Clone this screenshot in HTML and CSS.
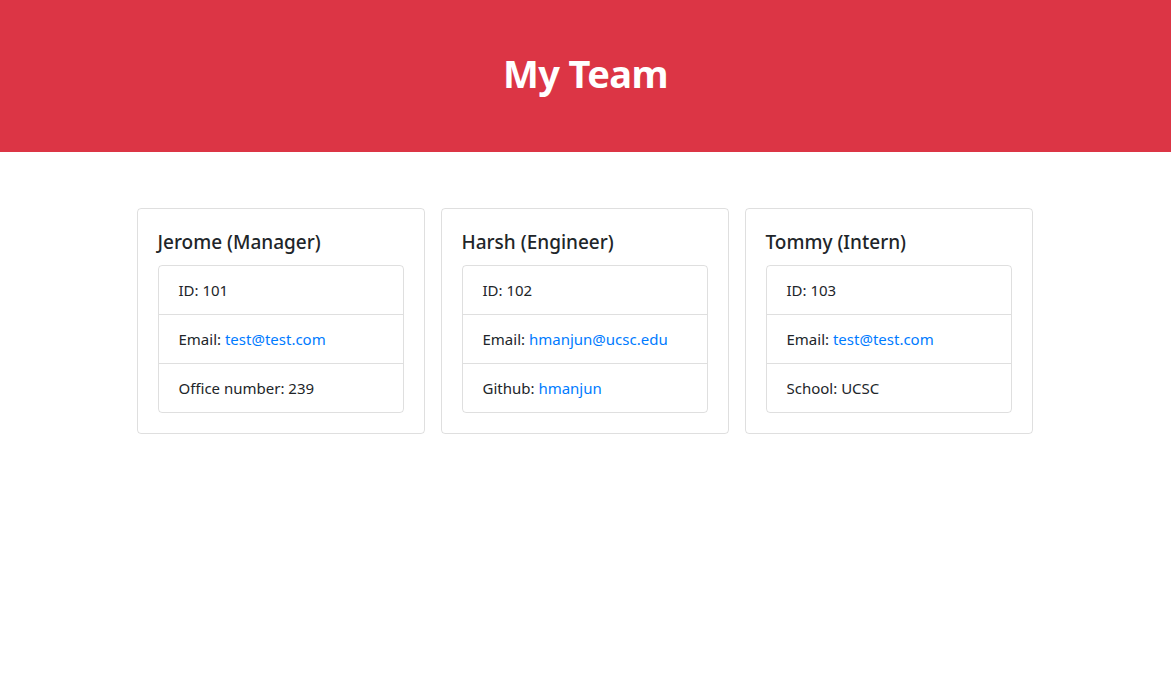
FILE: index.html
```html
<!DOCTYPE html>
<html lang="en">
<head>
<meta charset="utf-8">
<title>My Team</title>
<link rel="stylesheet" href="styles.css">
</head>
<body>
<header class="hero">
  <h1 class="hero-title">My Team</h1>
</header>
<main class="team">
  <section class="card">
    <h5 class="card-title">Jerome (Manager)</h5>
    <ul class="list">
      <li class="item">ID: 101</li>
      <li class="item">Email: <a class="link" href="mailto:test@test.com">test@test.com</a></li>
      <li class="item">Office number: 239</li>
    </ul>
  </section>
  <section class="card">
    <h5 class="card-title">Harsh (Engineer)</h5>
    <ul class="list">
      <li class="item">ID: 102</li>
      <li class="item">Email: <a class="link" href="mailto:hmanjun@ucsc.edu">hmanjun@ucsc.edu</a></li>
      <li class="item">Github: <a class="link" href="#">hmanjun</a></li>
    </ul>
  </section>
  <section class="card">
    <h5 class="card-title">Tommy (Intern)</h5>
    <ul class="list">
      <li class="item">ID: 103</li>
      <li class="item">Email: <a class="link" href="mailto:test@test.com">test@test.com</a></li>
      <li class="item">School: UCSC</li>
    </ul>
  </section>
</main>
</body>
</html>
```

FILE: styles.css
```css
* { box-sizing: border-box; }
body {
  margin: 0;
  font-family: "Noto Sans", "Open Sans", "Liberation Sans", sans-serif;
  font-size: 16px;
  line-height: 1.5;
  color: #212529;
  background: #fff;
}
.hero {
  background: #dc3545;
  height: 152px;
  padding-bottom: 4px;
  display: flex;
  align-items: center;
  justify-content: center;
}
.hero-title {
  margin: 0;
  color: #fff;
  font-size: 38px;
  font-weight: 700;
  line-height: 1.2;
  letter-spacing: -0.6px;
}
.team {
  display: flex;
  justify-content: center;
  gap: 16px;
  margin-top: 56px;
  padding-right: 2px;
}
.card {
  width: 288px;
  border: 1px solid rgba(0,0,0,.125);
  border-radius: 4px;
  padding: 20px;
}
.card-title {
  margin: 0 0 11px;
  padding-top: 1px;
  font-size: 19px;
  font-weight: 500;
  line-height: 24px;
}
.list {
  list-style: none;
  margin: 0;
  padding: 0;
  border: 1px solid rgba(0,0,0,.125);
  border-radius: 4px;
}
.item {
  padding: 12px 20px;
  font-size: 15px;
  line-height: 24px;
}
.item + .item { border-top: 1px solid rgba(0,0,0,.125); }
.link { color: #007bff; text-decoration: none; }
```
